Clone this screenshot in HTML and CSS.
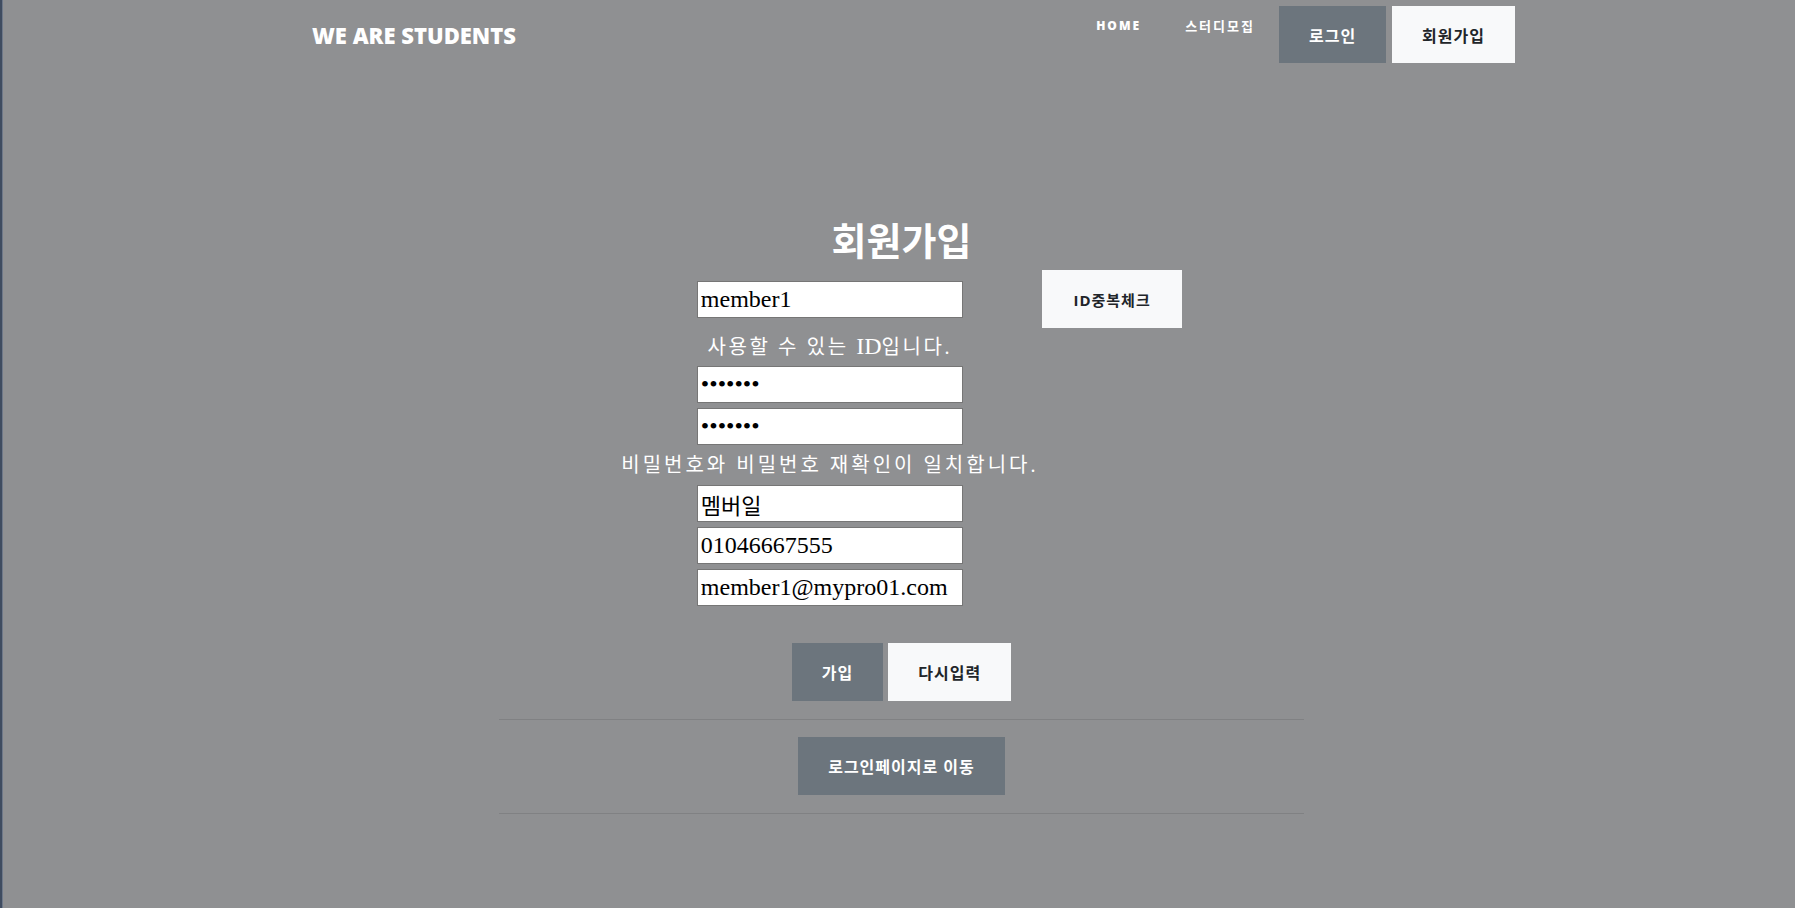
FILE: index.html
```html
<!DOCTYPE html>
<html lang="ko">
<head>
<meta charset="utf-8">
<title>회원가입</title>
<link rel="stylesheet" href="styles.css">
</head>
<body>
<header class="site-header">
  <div class="header-inner">
    <a class="brand" href="#">WE ARE STUDENTS</a>
    <nav class="nav">
      <a class="nav-link" href="#">HOME</a>
      <a class="nav-link nav-link-ko" href="#">스터디모집</a>
      <a class="btn btn-secondary nav-btn" href="#">로그인</a>
      <a class="btn btn-light nav-btn" href="#">회원가입</a>
    </nav>
  </div>
</header>
<main class="page">
  <h1 class="title">회원가입</h1>
  <form class="join-form">
    <div class="form-grid">
      <div class="col-main">
        <div class="id-row"><input class="field" type="text" value="member1"></div>
        <p class="msg msg-id">사용할 수 있는 <span class="latin">ID</span>입니다.</p>
        <input class="field" type="password" value="1234567">
        <input class="field" type="password" value="1234567">
        <p class="msg msg-pw">비밀번호와 비밀번호 재확인이 일치합니다.</p>
        <input class="field field-ko" type="text" value="멤버일">
        <input class="field" type="text" value="01046667555">
        <input class="field" type="text" value="member1@mypro01.com">
      </div>
      <div class="col-side">
        <button type="button" class="btn btn-light btn-check">ID중복체크</button>
      </div>
    </div>
    <div class="actions">
      <button type="submit" class="btn btn-secondary">가입</button>
      <button type="reset" class="btn btn-light">다시입력</button>
    </div>
  </form>
  <hr class="rule">
  <div class="actions">
    <a class="btn btn-secondary" href="#">로그인페이지로 이동</a>
  </div>
  <hr class="rule">
</main>
</body>
</html>
```

FILE: styles.css
```css
* { box-sizing: border-box; }
html, body { margin: 0; padding: 0; }
body {
  background: #8f9092;
  font-family: "Open Sans", "Noto Sans CJK KR", sans-serif;
  color: #fff;
  min-height: 908px;
  box-shadow: inset 2px 0 0 #3f4c60, inset 3px 0 0 #6e7889;
}
.site-header { padding: 6px 0 0 32px; }
.header-inner {
  width: 1203px;
  margin: 0 auto;
  height: 57px;
  display: flex;
  justify-content: space-between;
  align-items: center;
}
.brand {
  font-size: 22px;
  font-weight: 800;
  line-height: 30px;
  color: #fff;
  text-decoration: none;
}
.nav {
  display: flex;
  align-items: flex-start;
  align-self: stretch;
  gap: 4px;
}
.nav-link {
  margin-top: 10px;
  padding: 0 20px;
  font-size: 12px;
  font-weight: 800;
  line-height: 20px;
  letter-spacing: 2px;
  color: #fff;
  text-decoration: none;
}
.nav-link-ko { font-size: 13px; font-weight: 700; }
.btn {
  display: inline-flex;
  align-items: center;
  justify-content: center;
  height: 58px;
  padding: 0 30px;
  border: 0;
  border-radius: 0;
  font-family: "Open Sans", "Noto Sans CJK KR", sans-serif;
  font-size: 16px;
  font-weight: 700;
  letter-spacing: 1px;
  text-decoration: none;
  cursor: pointer;
  white-space: nowrap;
}
.btn-check { padding: 0 31px; font-size: 15px; }
.nav-btn { height: 57px; }
.nav-btn + .nav-btn { margin-left: 2px; }
.btn-secondary { background: #6c757d; color: #fff; }
.btn-light { background: #f8f9fa; color: #212529; }

.page {
  padding: 155px 0 0 8px;
  display: flex;
  flex-direction: column;
  align-items: center;
}
.title {
  margin: 0;
  font-size: 38px;
  line-height: 44px;
  font-weight: 700;
  color: #fff;
}
.form-grid {
  margin-top: 8px;
  display: flex;
  gap: 4px;
}
.col-main {
  display: flex;
  flex-direction: column;
  align-items: center;
}
.col-side { align-self: flex-start; }
.id-row {
  height: 58px;
  display: flex;
  align-items: center;
}
.field {
  width: 266px;
  height: 37px;
  margin: 0;
  padding: 0 3px;
  border: 1px solid #767676;
  background: #fff;
  color: #000;
  font-family: "Liberation Serif", "Noto Sans CJK KR", serif;
  font-size: 24px;
}
.field + .field { margin-top: 5px; }
.field-ko { font-size: 22px; }
.msg {
  margin: 0;
  font-family: "Liberation Serif", "Noto Sans CJK KR", serif;
  font-size: 20px;
  color: #fff;
  white-space: nowrap;
}
.msg-id { line-height: 37px; letter-spacing: 2.6px; }
.msg-pw { line-height: 40px; letter-spacing: 3px; }
.latin { font-size: 24px; letter-spacing: 0; }

.actions {
  display: flex;
  justify-content: center;
  gap: 5px;
}
.join-form .actions { margin-top: 37px; }
.rule {
  width: 805px;
  margin: 18px 0 17px;
  border: 0;
  border-top: 1px solid rgba(0, 0, 0, 0.1);
}
```
